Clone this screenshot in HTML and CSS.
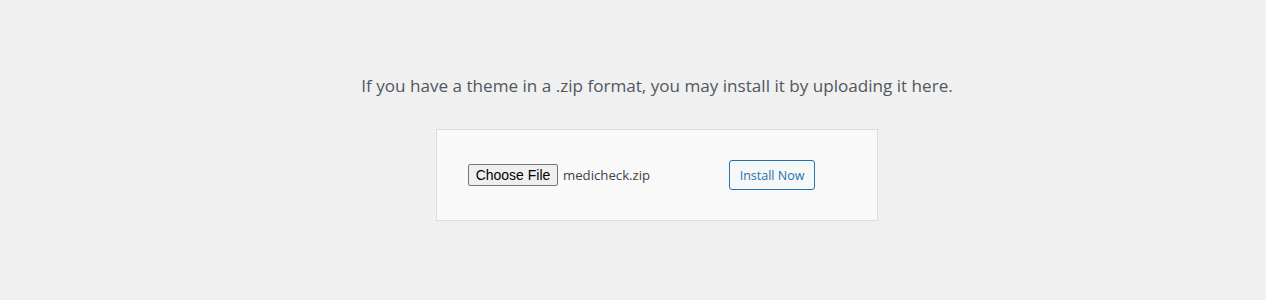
FILE: index.html
```html
<!DOCTYPE html>
<html lang="en">
<head>
  <meta charset="UTF-8" />
  <title>Upload Theme</title>
  <link rel="stylesheet" href="styles.css">
</head>
<body>
  <div class="upload-theme">
    <p class="install-help">If you have a theme in a .zip format, you may install it by uploading it here.</p>

    <form class="upload-form" onsubmit="return false;">
      <div class="file-field">
        <button type="button" class="choose-file">Choose File</button>
        <span class="file-name">medicheck.zip</span>
      </div>
      <button type="submit" class="install-button">Install Now</button>
    </form>
  </div>
</body>
</html>
```

FILE: styles.css
```css
/* Base */
body {
  margin: 0;
  background-color: #f0f0f1;
  color: #50575e;
  font-family: 'Open Sans', sans-serif;
}

.upload-theme {
  padding: 32px 0 0 48px;
  display: flex;
  flex-direction: column;
  align-items: center;
}

.install-help {
  margin: 0;
  padding: 0;
  font-size: 17.1px;
  line-height: 27px;
  color: #50575e;
  text-align: center;
  padding-top: 40px;
}

/* Upload box */
.upload-form {
  margin-top: 30px;
  width: 442px;
  box-sizing: border-box;
  display: flex;
  align-items: center;
  padding: 30px 62px 30px 31px;
  background: #f9f9f9;
  border: 1px solid #dcdcde;
}

.file-field {
  width: 253px;
  display: flex;
  align-items: center;
  margin-right: 8px;
}

.choose-file {
  width: 90px;
  height: 22px;
  padding: 0;
  margin-right: 5px;
  font-family: 'Liberation Sans', Arial, sans-serif;
  font-size: 14px;
  color: #000;
  background-color: #efefef;
  border: 1px solid #767676;
  border-radius: 2px;
}

.file-name {
  font-size: 13.2px;
  color: #3c434a;
}

.install-button {
  width: 86px;
  height: 30px;
  padding: 0;
  font-family: inherit;
  font-size: 12.5px;
  color: #2271b1;
  background-color: #f6f7f7;
  border: 1px solid #2271b1;
  border-radius: 3px;
  cursor: pointer;
}
```
